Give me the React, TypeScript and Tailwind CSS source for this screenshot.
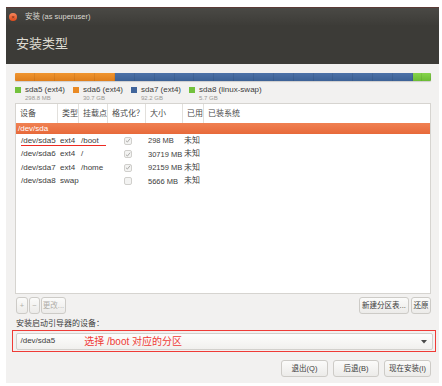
import React from "react";

const font = { fontFamily: '"Liberation Sans","Noto Sans CJK SC",sans-serif' };

function Check({ on }: { on: boolean }) {
  return (
    <div className="w-[8px] h-[8px] border border-[#d0cfcc] rounded-[2px] bg-[#f3f3f2] flex items-center justify-center">
      {on && (
        <svg width="7" height="7" viewBox="0 0 8 8">
          <path d="M1.2 4.2 L3.2 6.1 L6.8 1.6" stroke="#aaa9a6" strokeWidth="1.3" fill="none" />
        </svg>
      )}
    </div>
  );
}

const rows = [
  { dev: "/dev/sda5", t: "ext4", m: "/boot", f: true, s: "298 MB" },
  { dev: "/dev/sda6", t: "ext4", m: "/", f: true, s: "30719 MB" },
  { dev: "/dev/sda7", t: "ext4", m: "/home", f: true, s: "92159 MB" },
  { dev: "/dev/sda8", t: "swap", m: "", f: false, s: "5666 MB" },
];

const legend = [
  { c: "bg-[#73c13c]", n: "sda5 (ext4)", s: "298.8 MB" },
  { c: "bg-[#e98a25]", n: "sda6 (ext4)", s: "30.7 GB" },
  { c: "bg-[#41659b]", n: "sda7 (ext4)", s: "92.2 GB" },
  { c: "bg-[#73c13c]", n: "sda8 (linux-swap)", s: "5.7 GB" },
];

const cols = "grid grid-cols-[42px_21px_29px_38px_37px_21px_1fr]";

function Btn({ children, w, dis }: { children: React.ReactNode; w: string; dis?: boolean }) {
  return (
    <div
      className={`${w} h-full flex items-center justify-center rounded-[3px] border border-[#cdcbc7] bg-gradient-to-b from-[#fbfbfa] to-[#ecebe9] text-[7.5px] whitespace-nowrap ${dis ? "text-[#b0aea9]" : "text-[#3c3c3c]"}`}
    >
      {children}
    </div>
  );
}

function Ticks({ n }: { n: number }) {
  return (
    <div className="absolute inset-0 flex">
      {Array.from({ length: n }).map((_, i) => (
        <div key={i} className="flex-1 border-r border-[rgba(0,0,0,0.07)]" />
      ))}
    </div>
  );
}

export default function App() {
  return (
    <div className="w-[442px] h-[386px] bg-white overflow-hidden whitespace-nowrap" style={font}>
      <div className="ml-[6px] mt-[7px] w-[433px] h-[376px] flex flex-col">
        {/* title bar */}
        <div className="h-[18px] flex items-center bg-gradient-to-b from-[#4a4945] to-[#3d3c38] border-t border-[#5b3a36] shrink-0">
          <div className="ml-[3px] w-[8px] h-[8px] rounded-full bg-gradient-to-b from-[#f7855a] to-[#df4a17] flex items-center justify-center">
            <span className="text-[6px] leading-none text-[#6e2a10]">×</span>
          </div>
          <span className="ml-[8px] text-[7.5px] text-[#dcd9d2]">安装 (as superuser)</span>
        </div>
        {/* header */}
        <div className="h-[39px] bg-[#3c3b37] flex items-center pl-[10px] shrink-0">
          <span className="text-[13px] text-[#dfdbd2] -mt-[1px]">安装类型</span>
        </div>
        {/* content */}
        <div className="flex-1 bg-[#f2f1f0] pl-[9px] pr-[8px] pt-[9px] flex flex-col">
          {/* partition bar */}
          <div className="h-[8px] flex rounded-[1px] overflow-hidden shadow-[0_1px_1px_rgba(0,0,0,0.15)]">
            <div className="w-[100px] relative bg-gradient-to-b from-[#f0952f] to-[#df7f1c]">
              <Ticks n={5} />
            </div>
            <div className="flex-1 relative bg-gradient-to-b from-[#4d72a8] to-[#3d6296]">
              <Ticks n={15} />
            </div>
            <div className="w-[18px] relative bg-gradient-to-b from-[#86d44a] to-[#6cbc35]">
              <Ticks n={2} />
            </div>
          </div>
          {/* legend */}
          <div className="flex mt-[4px] h-[18px]">
            {legend.map((l, i) => (
              <div key={i} className={`flex ${i < 3 ? "w-[58px]" : ""}`}>
                <div className={`w-[6px] h-[6px] mt-[2px] ${l.c}`} />
                <div className="ml-[4px] flex flex-col">
                  <span className="text-[8px] leading-[9px] text-[#3c3c3c]">{l.n}</span>
                  <span className="text-[6px] leading-[8px] text-[#9a9894]">{l.s}</span>
                </div>
              </div>
            ))}
          </div>
          {/* table */}
          <div className="h-[191px] border border-[#d6d4d0] bg-white flex flex-col">
            <div className={`${cols} h-[19px] text-[8px] text-[#4a4a4a] shrink-0`}>
              {["设备", "类型", "挂载点", "格式化？", "大小", "已用", "已装系统"].map((h, i) => (
                <div key={i} className={`flex items-center pl-[4px] ${i < 6 ? "border-r border-[#e2e0dc]" : ""}`}>
                  {h}
                </div>
              ))}
            </div>
            <div className="h-[11px] bg-gradient-to-b from-[#f08152] to-[#e7693a] text-white text-[8px] flex items-center pl-[2px]">
              /dev/sda
            </div>
            <div>
              {rows.map((r, i) => (
                <div key={i} className={`${cols} h-[13.5px] text-[8px] text-[#3c3c3c] relative`}>
                  <div className="flex items-center pl-[5px]">{r.dev}</div>
                  <div className="flex items-center pl-[2px]">{r.t}</div>
                  <div className="flex items-center pl-[2px]">{r.m}</div>
                  <div className="flex items-center pl-[16px]">
                    <Check on={r.f} />
                  </div>
                  <div className="flex items-center pl-[2px] text-[7.5px]">{r.s}</div>
                  <div className="flex items-center pl-[1px]">未知</div>
                  <div />
                  {i === 0 && (
                    <div className="absolute left-[5px] top-[11px] w-[85px] h-[1px] bg-[#ec2a22]" />
                  )}
                </div>
              ))}
            </div>
          </div>
          {/* buttons row */}
          <div className="mt-[3px] h-[17px] flex">
            <div className="flex gap-[1px] h-full ml-[1px]">
              <Btn w="w-[12px]" dis>+</Btn>
              <Btn w="w-[11px]" dis>−</Btn>
              <Btn w="w-[25px]" dis>更改...</Btn>
            </div>
            <div className="ml-auto flex gap-[2px] h-full">
              <Btn w="w-[50px]">新建分区表...</Btn>
              <Btn w="w-[20px]">还原</Btn>
            </div>
          </div>
          {/* label */}
          <div className="mt-[5px] h-[10px] flex items-center pl-[1px] text-[8px] text-[#3c3c3c]">
            安装启动引导器的设备：
          </div>
          {/* red box */}
          <div className="mt-[1px] -ml-[3px] -mr-[5px] h-[22px] border-[1.5px] border-[#ef3b36] px-[2.5px] py-[1.5px]">
            <div className="h-full rounded-[2px] border border-[#d2d0cc] bg-gradient-to-b from-[#fdfdfc] to-[#f1f0ee] flex items-center relative">
              <span className="ml-[4px] text-[8px] text-[#3c3c3c]">/dev/sda5</span>
              <span className="ml-[29px] text-[10px] text-[#ef3b36]">选择 /boot 对应的分区</span>
              <svg className="absolute right-[5px] top-[6px]" width="6" height="4" viewBox="0 0 6 4">
                <path d="M0 0 L6 0 L3 3.5 Z" fill="#4a4a4a" />
              </svg>
            </div>
          </div>
          {/* bottom buttons */}
          <div className="mt-[8px] h-[17px] flex justify-end gap-[5px]">
            <Btn w="w-[47px]">退出(Q)</Btn>
            <Btn w="w-[46px]">后退(B)</Btn>
            <Btn w="w-[47px]">现在安装(I)</Btn>
          </div>
        </div>
      </div>
    </div>
  );
}
